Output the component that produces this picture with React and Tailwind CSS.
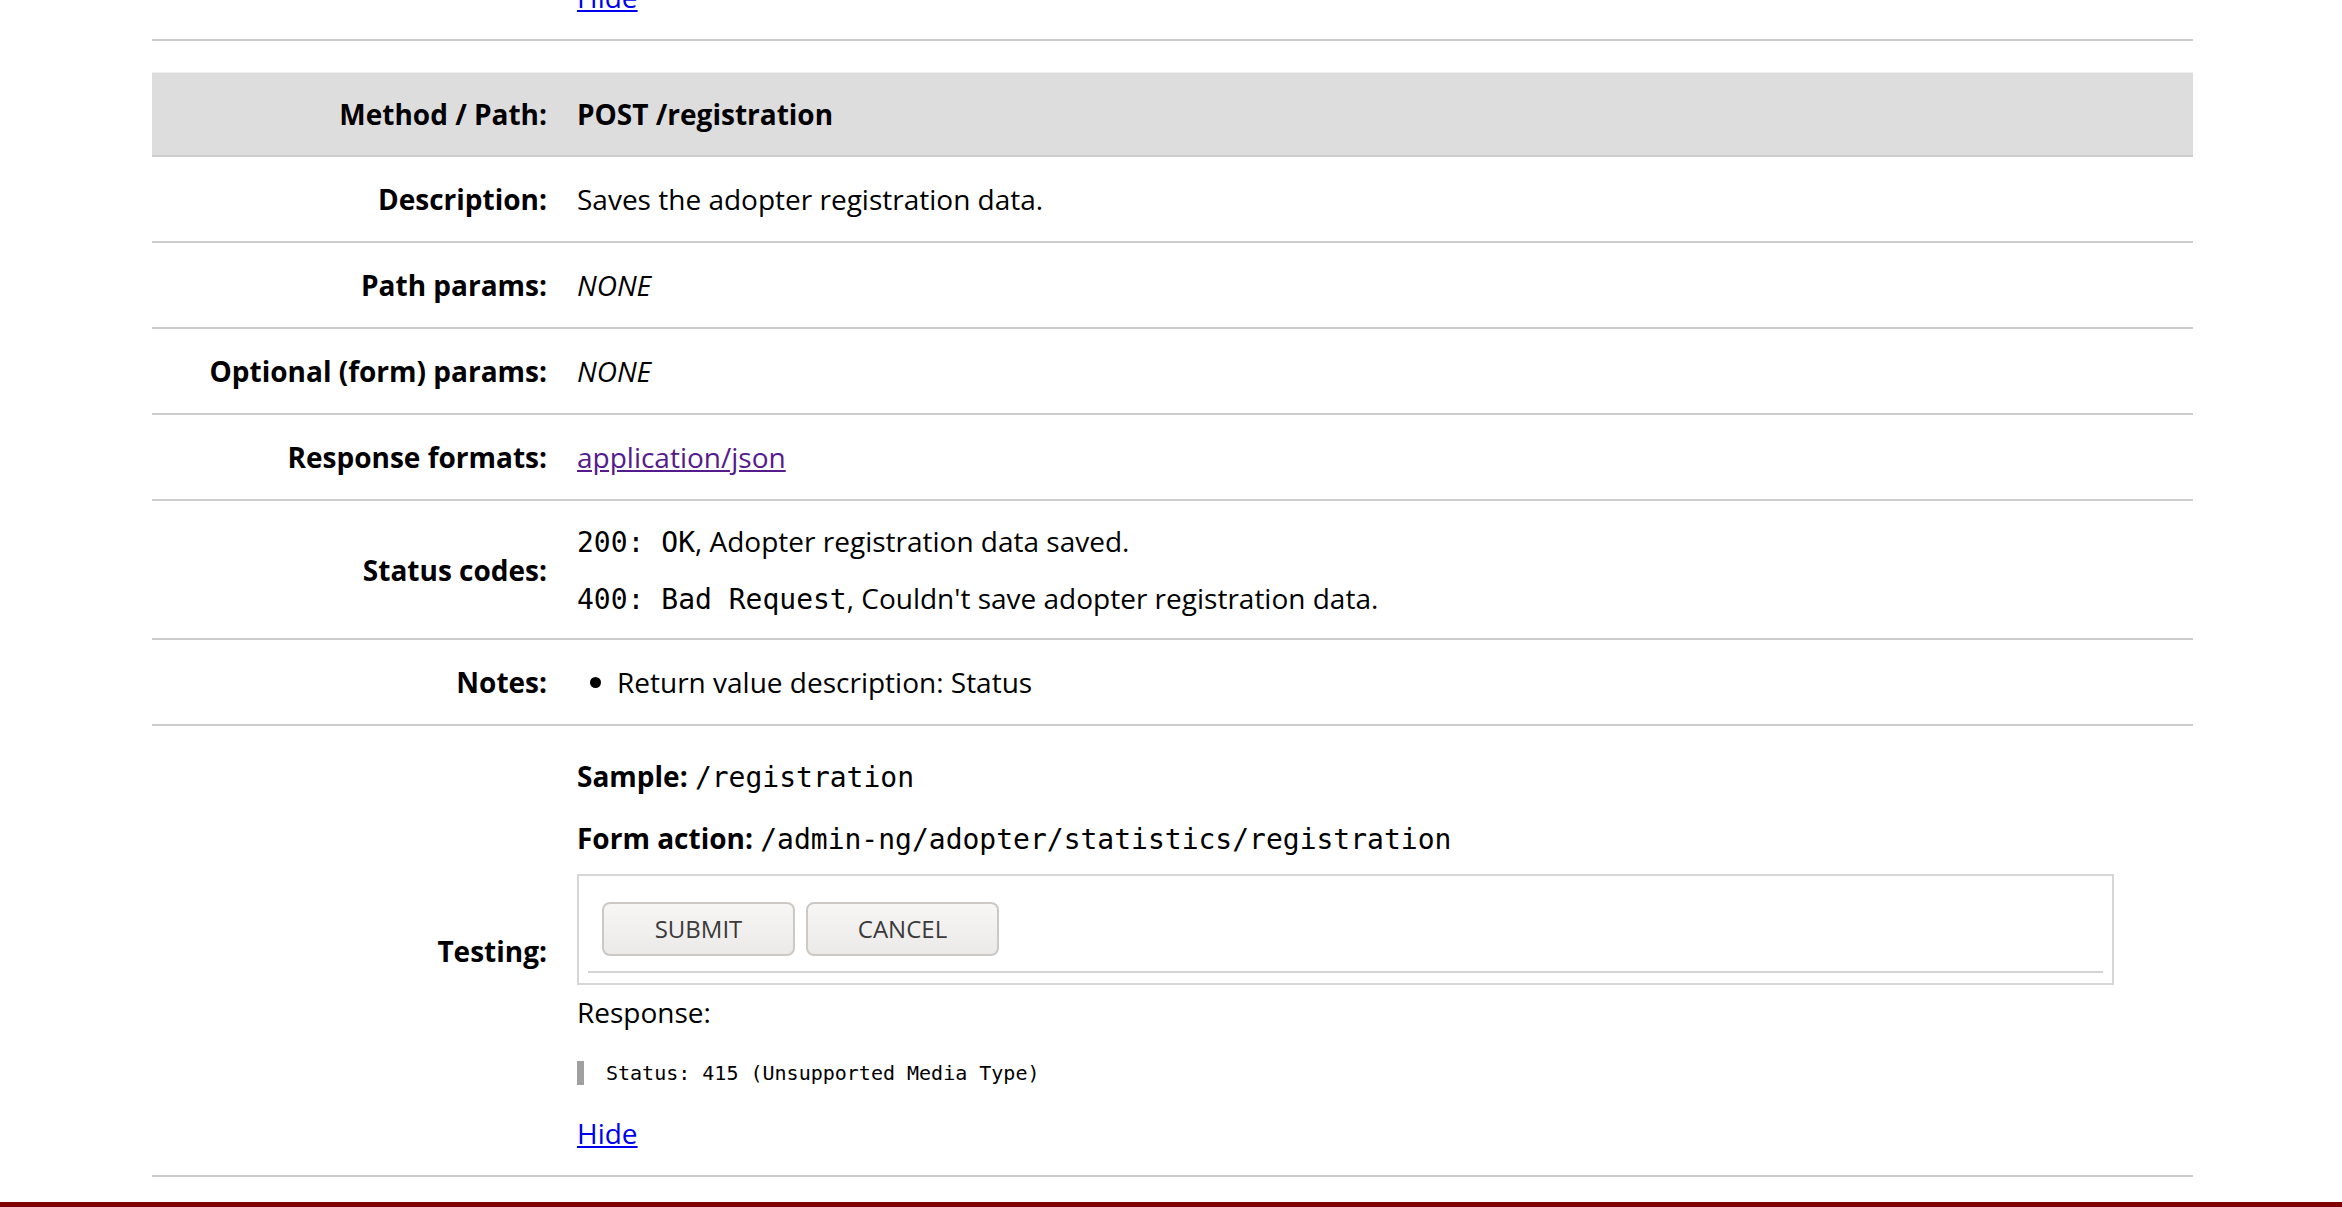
import React from "react";

const mono = "font-['DejaVu_Sans_Mono',monospace] leading-none";

function Row({ label, children, className = "", cellClass = "py-[21px]" }) {
  return (
    <div className={"grid grid-cols-[410px_1fr] items-center border-b-2 border-[#cccccc] " + className}>
      <div className="pr-[15px] text-right font-bold">{label}</div>
      <div className={"pl-[15px] " + cellClass}>{children}</div>
    </div>
  );
}

export default function App() {
  return (
    <div className="min-h-screen overflow-hidden bg-white font-['Open_Sans',sans-serif] text-[28px] leading-[42px] text-black">
      {/* tail of the previous endpoint */}
      <div className="ml-[152px] w-[2041px] -mt-[24px]">
        <Row label="" cellClass="pb-[21px]">
          <a href="#" className="text-[#0000ee] underline">Hide</a>
        </Row>
      </div>

      {/* POST /registration */}
      <div className="ml-[152px] w-[2041px] mt-[31px]">
        <Row
          label="Method / Path:"
          className="bg-[#dddddd] border-t border-t-[#eeeeee]"
          cellClass="py-[20px] font-bold"
        >
          POST /registration
        </Row>
        <Row label="Description:">Saves the adopter registration data.</Row>
        <Row label="Path params:">
          <em>NONE</em>
        </Row>
        <Row label="Optional (form) params:">
          <em>NONE</em>
        </Row>
        <Row label="Response formats:">
          <a href="#" className="text-[#551a8b] underline">application/json</a>
        </Row>
        <Row label="Status codes:" cellClass="py-[19px]">
          <div className="flex flex-col gap-[15px]">
            <div className="h-[42px]">
              <code className={mono}>200: OK</code>, Adopter registration data saved.
            </div>
            <div className="h-[42px]">
              <code className={mono}>400: Bad Request</code>, Couldn't save adopter registration data.
            </div>
          </div>
        </Row>
        <Row label="Notes:">
          <div className="flex items-center">
            <span className="ml-[13px] mr-[16px] h-[11px] w-[11px] rounded-full bg-black" />
            <span>Return value description: Status</span>
          </div>
        </Row>
        <Row label="Testing:" cellClass="pt-[29px] pb-[21px]">
          <p className="h-[42px]">
            <strong>Sample:</strong> <span className={mono}>/registration</span>
          </p>
          <p className="mt-[20px] h-[42px]">
            <strong>Form action:</strong>{" "}
            <span className={mono}>/admin-ng/adopter/statistics/registration</span>
          </p>
          <form className="mt-[15px] w-[1537px] border-2 border-[#d6d6d6] px-[9px] pt-[26px] pb-[10px]">
            <div className="flex gap-[11px] pl-[14px]">
              <button
                type="button"
                className="flex h-[54px] w-[193px] items-center justify-center rounded-[8px] border-2 border-[#cdc8c4] bg-gradient-to-b from-[#f7f6f5] to-[#eceae8] text-[24px] text-[#3a3a3a]"
              >
                SUBMIT
              </button>
              <button
                type="button"
                className="flex h-[54px] w-[193px] items-center justify-center rounded-[8px] border-2 border-[#cdc8c4] bg-gradient-to-b from-[#f7f6f5] to-[#eceae8] text-[24px] text-[#3a3a3a]"
              >
                CANCEL
              </button>
            </div>
            <div className="mt-[15px] h-[2px] bg-[#d4d4d4]" />
          </form>
          <p className="mt-[6px]">Response:</p>
          <div className="mt-[28px] h-[24px] border-l-[7px] border-[#a0a0a0] pl-[22px] font-['DejaVu_Sans_Mono',monospace] text-[20px] leading-[24px]">
            Status: 415 (Unsupported Media Type)
          </div>
          <div className="mt-[27px]">
            <a href="#" className="text-[#0000ee] underline">Hide</a>
          </div>
        </Row>
      </div>

      {/* footer band */}
      <div className="mt-[25px] h-[40px] bg-[#800000]" />
    </div>
  );
}
